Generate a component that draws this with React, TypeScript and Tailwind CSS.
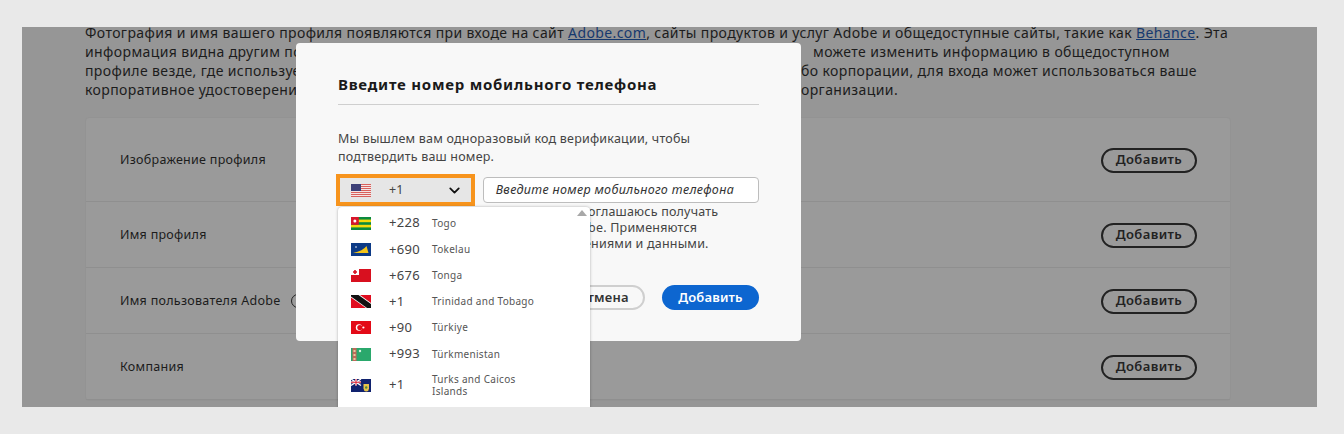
import React from 'react';
import { ChevronDown } from 'lucide-react';

const font = 'font-["Noto_Sans","Open_Sans",sans-serif]';

const FlagUS = () => (
  <svg width="20" height="13" viewBox="0 0 20 13">
    <rect width="20" height="13" fill="#f4e4e4" />
    <rect y="0" width="20" height="1" fill="#d9605c" />
    <rect y="2" width="20" height="1" fill="#d9605c" />
    <rect y="4" width="20" height="1" fill="#d9605c" />
    <rect y="6" width="20" height="1" fill="#d9605c" />
    <rect y="8" width="20" height="1" fill="#d9605c" />
    <rect y="10" width="20" height="1" fill="#d9605c" />
    <rect y="12" width="20" height="1" fill="#d9605c" />
    <rect width="10" height="7" fill="#3c3f77" />
  </svg>
);

const FlagTogo = () => (
  <svg width="20" height="13" viewBox="0 0 20 13">
    <rect width="20" height="13" fill="#0b8a3e" />
    <rect y="2.6" width="20" height="2.6" fill="#f5d90a" />
    <rect y="7.8" width="20" height="2.6" fill="#f5d90a" />
    <rect width="7.8" height="7.8" fill="#d8172b" />
    <circle cx="3.9" cy="3.9" r="1.5" fill="#fff" />
  </svg>
);

const FlagTokelau = () => (
  <svg width="20" height="13" viewBox="0 0 20 13">
    <rect width="20" height="13" fill="#0c3a86" />
    <path d="M2 10 L17.5 10 L15.5 3 Q12 8 2 10 Z" fill="#f5c518" />
    <circle cx="5" cy="4" r="0.8" fill="#fff" />
  </svg>
);

const FlagTonga = () => (
  <svg width="20" height="13" viewBox="0 0 20 13">
    <rect width="20" height="13" fill="#d8101f" />
    <rect width="8" height="6" fill="#fff" />
    <path d="M3.2 1h1.6v1.2H6v1.6H4.8V5H3.2V3.8H2V2.2h1.2Z" fill="#d8101f" />
  </svg>
);

const FlagTrinidad = () => (
  <svg width="20" height="13" viewBox="0 0 20 13">
    <rect width="20" height="13" fill="#e00d1f" />
    <path d="M3 0 L9 0 L20 8 L20 13 L15 13 L0 2.5 L0 0 Z" fill="#fff" />
    <path d="M2 0 L7.5 0 L20 9 L20 13 L16 13 L0 1.5 L0 0 Z" fill="#111" />
  </svg>
);

const FlagTurkey = () => (
  <svg width="20" height="13" viewBox="0 0 20 13">
    <rect width="20" height="13" fill="#e30a17" />
    <circle cx="8" cy="6.5" r="3.2" fill="#fff" />
    <circle cx="8.9" cy="6.5" r="2.6" fill="#e30a17" />
    <circle cx="12.4" cy="6.5" r="1.1" fill="#fff" />
  </svg>
);

const FlagTurkmenistan = () => (
  <svg width="20" height="13" viewBox="0 0 20 13">
    <rect width="20" height="13" fill="#2aa86c" />
    <rect x="1.5" width="4" height="13" fill="#c06a5a" />
    <rect x="2.5" y="2" width="2" height="2" fill="#e8c9a0" />
    <rect x="2.5" y="6" width="2" height="2" fill="#e8c9a0" />
    <rect x="2.5" y="10" width="2" height="2" fill="#e8c9a0" />
    <circle cx="9" cy="3" r="1.2" fill="#d8f0e0" />
  </svg>
);

const FlagTurks = () => (
  <svg width="20" height="13" viewBox="0 0 20 13">
    <rect width="20" height="13" fill="#10226e" />
    <path d="M0 0 L10 6.5 M10 0 L0 6.5" stroke="#fff" strokeWidth="1.3" />
    <path d="M5 0 V6.5 M0 3.25 H10" stroke="#fff" strokeWidth="2" />
    <path d="M5 0 V6.5 M0 3.25 H10" stroke="#d8172b" strokeWidth="1" />
    <path d="M12.5 5 H18 V9.5 Q18 12 15.25 12.6 Q12.5 12 12.5 9.5 Z" fill="#e6c24a" />
    <circle cx="15.2" cy="8.5" r="1.2" fill="#4b8a3e" />
  </svg>
);

const countries = [
  { code: '+228', name: 'Togo', flag: <FlagTogo /> },
  { code: '+690', name: 'Tokelau', flag: <FlagTokelau /> },
  { code: '+676', name: 'Tonga', flag: <FlagTonga /> },
  { code: '+1', name: 'Trinidad and Tobago', flag: <FlagTrinidad /> },
  { code: '+90', name: 'Türkiye', flag: <FlagTurkey /> },
  { code: '+993', name: 'Türkmenistan', flag: <FlagTurkmenistan /> },
];

const profileRows = [
  { label: 'Изображение профиля', height: 'h-[84px]' },
  { label: 'Имя профиля', height: 'h-[66px]' },
  { label: 'Имя пользователя Adobe', height: 'h-[66px]', info: true },
  { label: 'Компания', height: 'h-[66px]' },
];

const App = () => {
  return (
    <div className={`h-[434px] w-[1344px] overflow-hidden bg-[#e9e9e9] pl-[22px] pt-[27px] ${font}`}>
      <div className="relative h-[380px] w-[1295px] overflow-hidden bg-[#969696]">
        <div className="pl-[63px] text-[14px] leading-[19px] tracking-[0.39px] text-[#1c1c1c]">
          <p className="-mt-[4px] whitespace-nowrap">
            Фотография и имя вашего профиля появляются при входе на сайт{' '}
            <span className="text-[#16396e] underline">Adobe.com</span>, сайты продуктов и услуг Adobe и общедоступные сайты, такие как{' '}
            <span className="text-[#16396e] underline">Behance</span>. Эта
          </p>
          <div className="flex whitespace-nowrap">
            <span className="w-[728px]">информация видна другим пользователям</span>
            <span>можете изменить информацию в общедоступном</span>
          </div>
          <div className="flex whitespace-nowrap">
            <span className="w-[716px]">профиле везде, где используется</span>
            <span>бо корпорации, для входа может использоваться ваше</span>
          </div>
          <div className="flex whitespace-nowrap">
            <span className="w-[716px]">корпоративное удостоверение</span>
            <span>организации.</span>
          </div>
        </div>

        <div className="ml-[63px] mt-[18px] w-[1146px] rounded border border-[#939393] bg-[#9a9a9a] text-[#1c1c1c]">
          {profileRows.map((row) => (
            <div key={row.label} className={`flex items-center justify-between border-b border-[#8f8f8f] pl-[34px] pr-[33px] pt-[1px] ${row.height}`}>
              <div className="flex items-center gap-[10px] text-[12.5px] tracking-[0.28px]">
                {row.label}
                {row.info && <span className="size-[14px] rounded-full border border-[#222]" />}
              </div>
              <button className="h-[25px] w-[96px] rounded-full border-2 border-[#222] text-[13px] font-semibold tracking-[0.4px] text-[#222]">
                Добавить
              </button>
            </div>
          ))}
        </div>

        <div className="absolute left-[274px] top-[16px] h-[298px] w-[505px] rounded bg-[#f8f8f8] px-[42px] pt-[31px] text-[#444]">
          <h2 className="text-[15px] font-bold leading-[20px] tracking-[0.75px] text-[#1a1a1a]">Введите номер мобильного телефона</h2>
          <div className="mt-[10px] h-px bg-[#cfcfcf]" />
          <p className="mt-[25px] text-[12.5px] leading-[18px] tracking-[0.2px]">
            Мы вышлем вам одноразовый код верификации, чтобы
            <br />
            подтвердить ваш номер.
          </p>
          <div className="relative z-10 -ml-[2px] mt-[8px] flex items-center gap-[8px]">
            <div className="flex h-[32px] w-[139px] items-center border-4 border-[#f7941d] bg-[#e6e6e6] pl-[11px] pr-[8px] text-[#444]">
              <FlagUS />
              <span className="ml-[18px] text-[12.5px]">+1</span>
              <ChevronDown className="ml-auto size-[17px] text-[#111]" strokeWidth={2.5} />
            </div>
            <div className="flex h-[26px] w-[277px] items-center rounded border border-[#bdbdbd] bg-white pl-[12px] text-[12.5px] italic tracking-[0.33px] text-[#333]">
              Введите номер мобильного телефона
            </div>
          </div>
          <div className="-mt-[2px] whitespace-nowrap pl-[85px] text-[12.5px] leading-[16px] tracking-[0.2px]">
            <div className="pl-[30px]">Я подтверждаю, что соглашаюсь получать</div>
            <div>текстовые сообщения Adobe. Применяются</div>
            <div className="pl-[7px]">тарифы на обмен сообщениями и данными.</div>
          </div>
          <div className="mt-[33px] flex justify-end gap-[17px]">
            <button className="h-[25px] w-[84px] rounded-full border-2 border-[#cfcfcf] text-[13px] font-semibold tracking-[0.2px] text-[#333]">
              Отмена
            </button>
            <button className="h-[25px] w-[97px] rounded-full bg-[#0d66d0] text-[13px] font-semibold tracking-[0.15px] text-white">
              Добавить
            </button>
          </div>
        </div>

        <div className="absolute left-[316px] top-[180px] z-20 h-[230px] w-[252px] rounded-t bg-white pt-[3px] shadow-[0_0_3px_rgba(0,0,0,0.3)]">
          <span className="absolute right-[3px] top-[3px] h-0 w-0 border-x-[5px] border-b-[6px] border-x-transparent border-b-[#a8a8a8]" />
          {countries.map((c) => (
            <div key={c.name} className="flex h-[26.2px] items-center pl-[13px]">
              {c.flag}
              <span className="ml-[18px] w-[43px] text-[13px] tracking-[0.3px] text-[#444]">{c.code}</span>
              <span className="text-[10px] tracking-[0.3px] text-[#555]">{c.name}</span>
            </div>
          ))}
          <div className="flex h-[36px] items-center pl-[13px]">
            <FlagTurks />
            <span className="ml-[18px] w-[43px] text-[13px] tracking-[0.3px] text-[#444]">+1</span>
            <span className="text-[10px] leading-[12px] tracking-[0.3px] text-[#555]">
              Turks and Caicos
              <br />
              Islands
            </span>
          </div>
        </div>
      </div>
    </div>
  );
};

export default App;
